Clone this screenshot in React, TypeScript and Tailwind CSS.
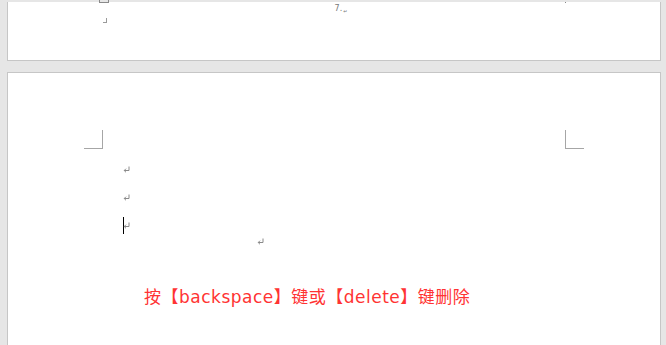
import React from "react";

function ReturnMark({ className = "" }: { className?: string }) {
  return (
    <svg width="7" height="7" viewBox="0 0 7 7" className={className}>
      <path d="M6 0.5V4.5H1.2M3 2.7L1.2 4.5L3 6.3" fill="none" stroke="#8a8a8a" strokeWidth="1" />
    </svg>
  );
}

export default function App() {
  const lines = [0, 1, 2];

  return (
    <div className="h-[345px] overflow-hidden bg-[#e6e6e6] pl-[7px] pr-[5px] pt-[2px] font-['DejaVu_Sans','Noto_Sans_CJK_SC',sans-serif]">
      {/* end of previous page */}
      <div className="h-[59px] bg-white border-x border-b border-[#c6c6c6]">
        <div className="flex items-start h-[10px]">
          <div className="ml-[91px] -mt-[2px] w-[10px] h-[3px] border-x border-b border-[#8a8a8a]" />
          <div className="flex-1 flex justify-center pl-[8px] pt-[2px]">
            <span className="text-[8px] leading-[10px] text-[#7a7a7a] flex items-end">
              7.<span className="text-[5px] leading-[6px] ml-px">↵</span>
            </span>
          </div>
          <div className="mr-[94px] w-px h-px bg-[#8a8a8a]" />
        </div>
        <div className="pl-[95px] pt-[6px]">
          <span className="block w-[4px] h-[5px] border-r border-b border-[#9a9a9a]" />
        </div>
      </div>

      {/* current page */}
      <div className="mt-[11px] h-[300px] bg-white border border-[#c6c6c6] pt-[57px]">
        <div className="flex gap-[462px] pl-[76px]">
          <div className="w-[19px] h-[19px] border-r border-b border-[#a6a6a6]" />
          <div className="w-[19px] h-[19px] border-l border-b border-[#a6a6a6]" />
        </div>
        <div className="pt-[6px]">
          {lines.map((i) => (
            <div key={i} className="h-[28px] flex items-center pl-[115px]">
              {i === 2 && <span className="w-px h-[17px] bg-black -mr-px" />}
              <ReturnMark />
            </div>
          ))}
          <div className="h-[8px] pl-[249px]">
            <ReturnMark className="-mt-[1px]" />
          </div>
          <div className="mt-[39px] pl-[136px] text-[17px] leading-[24px] tracking-[0.5px] text-[#ff3333] whitespace-nowrap">
            按【backspace】键或【delete】键删除
          </div>
        </div>
      </div>
    </div>
  );
}
